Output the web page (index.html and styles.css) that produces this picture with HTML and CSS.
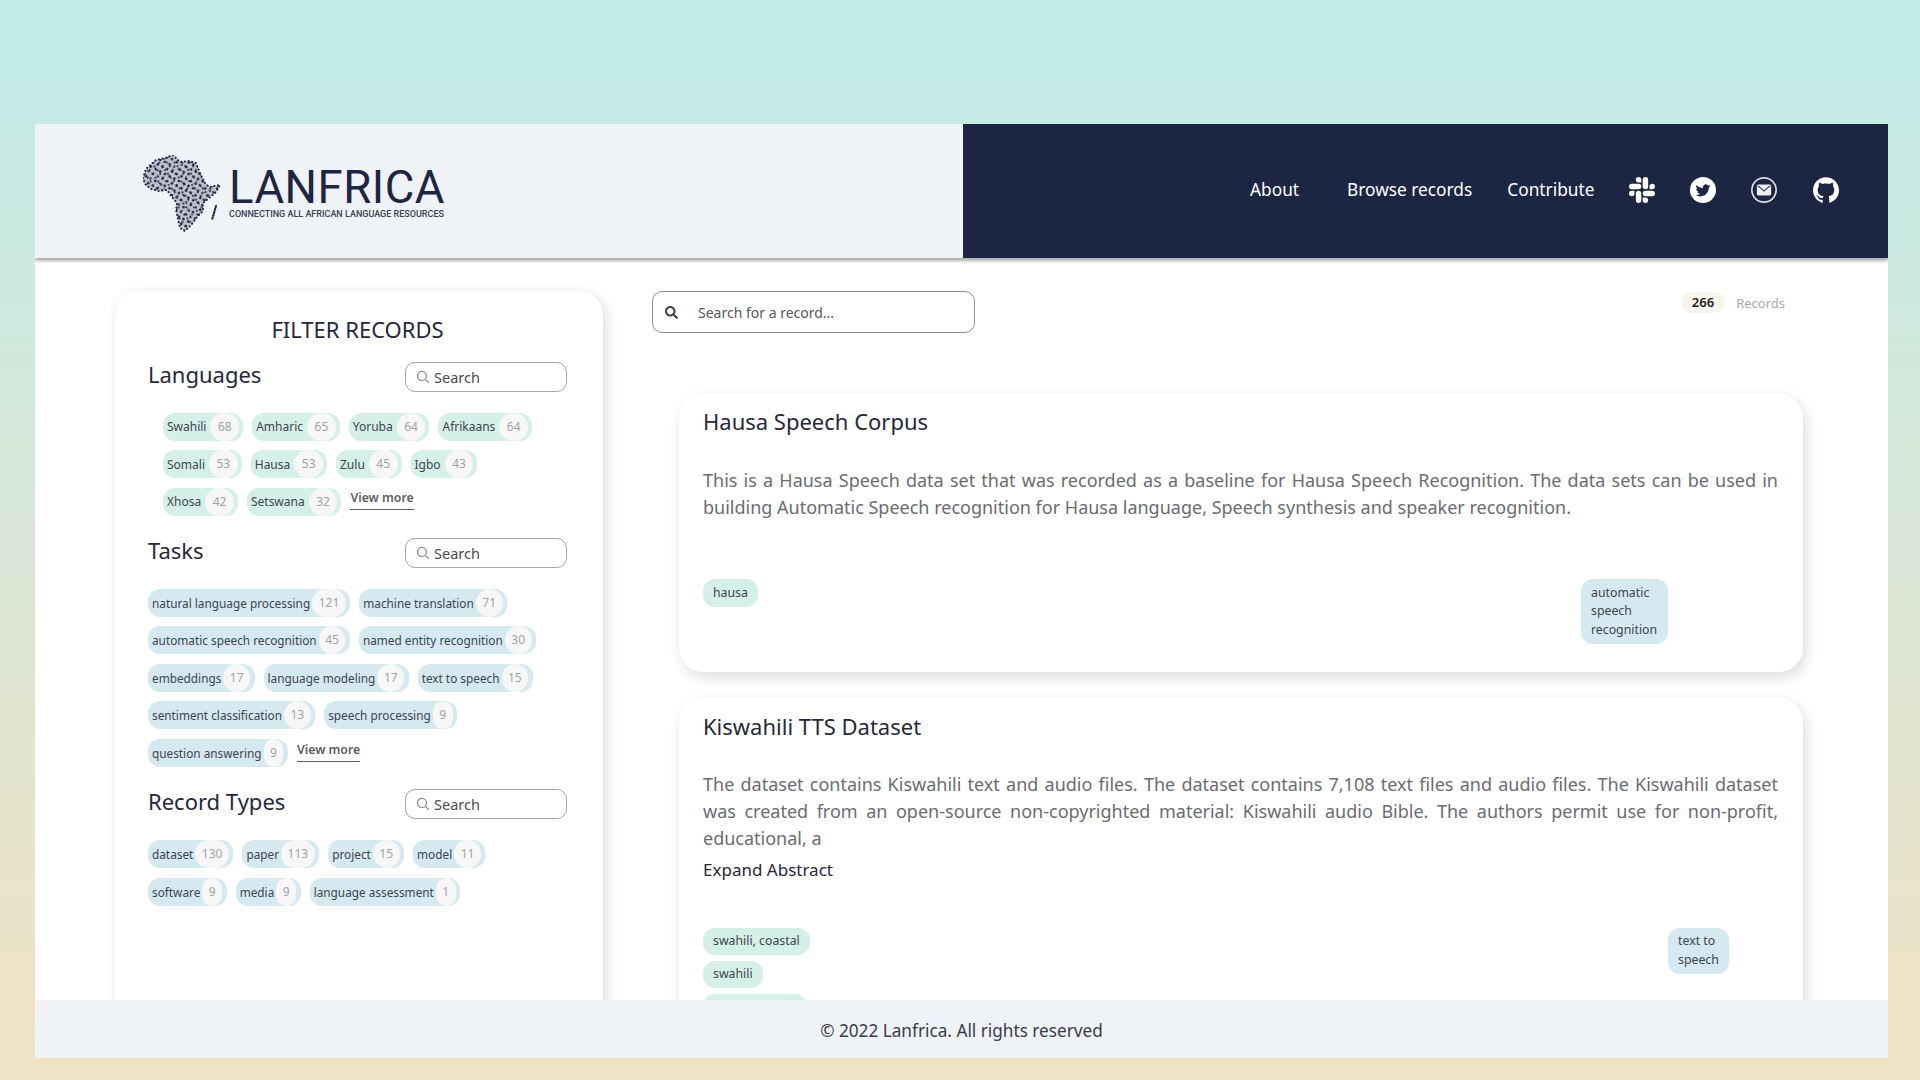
FILE: index.html
```html
<!DOCTYPE html>
<html lang="en">
<head>
<meta charset="utf-8">
<title>Lanfrica</title>
<link rel="stylesheet" href="styles.css">
</head>
<body>
<div class="frame">
  <header class="header">
    <div class="brand">
      <svg class="africa" viewBox="0 0 80 78" aria-hidden="true">
        <defs>
          <pattern id="dots-a" width="5.3" height="5.3" patternUnits="userSpaceOnUse" patternTransform="rotate(27)">
            <circle cx="1.6" cy="1.6" r="1.35" fill="#161c34"/>
          </pattern>
          <pattern id="dots-b" width="6.1" height="4.7" patternUnits="userSpaceOnUse" patternTransform="rotate(-38)">
            <circle cx="2" cy="2" r="1.05" fill="#272d45"/>
          </pattern>
          <pattern id="dots-c" width="7.3" height="6.7" patternUnits="userSpaceOnUse" patternTransform="rotate(64)">
            <circle cx="3" cy="3" r="0.7" fill="#eff2f6"/>
          </pattern>
          <path id="africa-shape" d="M0 23 L3 14 L13 5 L22 3 L30 0 L37 7 L46 6 L53 8 L57 18 L62 28 L66 32 L77 30 L73 37 L66 43 L60 48 L60 56 L54 62 L49 69 L42 76 L37 73 L35 64 L33 55 L34 48 L29 42 L24 35 L15 36 L8 34 L2 29 Z"/>
        </defs>
        <use href="#africa-shape" fill="#bcc1cc"/>
        <use href="#africa-shape" fill="url(#dots-a)"/>
        <use href="#africa-shape" fill="url(#dots-b)"/>
        <use href="#africa-shape" fill="url(#dots-c)"/>
        <use href="#africa-shape" fill="none" stroke="#1e2440" stroke-width="2" stroke-linecap="round" stroke-dasharray="0.1 3.6"/>
        <path d="M73 51 L69 65" fill="none" stroke="#272d45" stroke-width="2.2" stroke-linecap="round" stroke-dasharray="1.2 1.8"/>
      </svg>
      <div class="wordmark">
        <div class="wordmark-name">LANFRICA</div>
        <div class="wordmark-tag">CONNECTING ALL AFRICAN LANGUAGE RESOURCES</div>
      </div>
    </div>
    <nav class="nav">
      <a class="nav-link nav-about">About</a>
      <a class="nav-link">Browse records</a>
      <a class="nav-link">Contribute</a>
      <svg class="nav-icon nav-slack" viewBox="0 0 24 24" fill="#fff" aria-hidden="true"><path d="M5.042 15.165a2.528 2.528 0 0 1-2.52 2.523A2.528 2.528 0 0 1 0 15.165a2.527 2.527 0 0 1 2.522-2.52h2.52v2.52zM6.313 15.165a2.527 2.527 0 0 1 2.521-2.52 2.527 2.527 0 0 1 2.521 2.52v6.313A2.528 2.528 0 0 1 8.834 24a2.528 2.528 0 0 1-2.521-2.522v-6.313zM8.834 5.042a2.528 2.528 0 0 1-2.521-2.52A2.528 2.528 0 0 1 8.834 0a2.528 2.528 0 0 1 2.521 2.522v2.52H8.834zM8.834 6.313a2.528 2.528 0 0 1 2.521 2.521 2.528 2.528 0 0 1-2.521 2.521H2.522A2.528 2.528 0 0 1 0 8.834a2.528 2.528 0 0 1 2.522-2.521h6.312zM18.956 8.834a2.528 2.528 0 0 1 2.522-2.521A2.528 2.528 0 0 1 24 8.834a2.528 2.528 0 0 1-2.522 2.521h-2.522V8.834zM17.688 8.834a2.528 2.528 0 0 1-2.523 2.521 2.527 2.527 0 0 1-2.52-2.521V2.522A2.527 2.527 0 0 1 15.165 0a2.528 2.528 0 0 1 2.523 2.522v6.312zM15.165 18.956a2.528 2.528 0 0 1 2.523 2.522A2.528 2.528 0 0 1 15.165 24a2.527 2.527 0 0 1-2.52-2.522v-2.522h2.52zM15.165 17.688a2.527 2.527 0 0 1-2.52-2.523 2.526 2.526 0 0 1 2.52-2.52h6.313A2.527 2.527 0 0 1 24 15.165a2.528 2.528 0 0 1-2.522 2.523h-6.313z"/></svg>
      <svg class="nav-icon" viewBox="0 0 24 24" aria-hidden="true"><circle cx="12" cy="12" r="12" fill="#fff"/><path fill="#1c2542" transform="translate(5.2 5.6) scale(.565)" d="M23.953 4.57a10 10 0 01-2.825.775 4.958 4.958 0 002.163-2.723c-.951.555-2.005.959-3.127 1.184a4.92 4.92 0 00-8.384 4.482C7.69 8.095 4.067 6.13 1.64 3.162a4.822 4.822 0 00-.666 2.475c0 1.71.87 3.213 2.188 4.096a4.904 4.904 0 01-2.228-.616v.06a4.923 4.923 0 003.946 4.827 4.996 4.996 0 01-2.212.085 4.936 4.936 0 004.604 3.417 9.867 9.867 0 01-6.102 2.105c-.39 0-.779-.023-1.17-.067a13.995 13.995 0 007.557 2.209c9.053 0 13.998-7.496 13.998-13.985 0-.21 0-.42-.015-.63A9.935 9.935 0 0024 4.59z"/></svg>
      <svg class="nav-icon" viewBox="0 0 24 24" aria-hidden="true"><circle cx="12" cy="12" r="11.2" fill="none" stroke="#dfe1e9" stroke-width="1.5"/><rect x="5.4" y="7" width="13.2" height="10" rx="1.2" fill="#eef0f4"/><path d="M6.2 8 L12 12.9 L17.8 8" fill="none" stroke="#3d4560" stroke-width="1.1"/></svg>
      <svg class="nav-icon" viewBox="0 0 24 24" fill="#fff" aria-hidden="true"><path d="M12 .297c-6.63 0-12 5.373-12 12 0 5.303 3.438 9.8 8.205 11.385.6.113.82-.258.82-.577 0-.285-.01-1.04-.015-2.04-3.338.724-4.042-1.61-4.042-1.61C4.422 18.07 3.633 17.7 3.633 17.7c-1.087-.744.084-.729.084-.729 1.205.084 1.838 1.236 1.838 1.236 1.07 1.835 2.809 1.305 3.495.998.108-.776.417-1.305.76-1.605-2.665-.3-5.466-1.332-5.466-5.93 0-1.31.465-2.38 1.235-3.22-.135-.303-.54-1.523.105-3.176 0 0 1.005-.322 3.3 1.23.96-.267 1.98-.399 3-.405 1.02.006 2.04.138 3 .405 2.28-1.552 3.285-1.23 3.285-1.23.645 1.653.24 2.873.12 3.176.765.84 1.23 1.91 1.23 3.22 0 4.61-2.805 5.625-5.475 5.92.42.36.81 1.096.81 2.22 0 1.606-.015 2.896-.015 3.286 0 .315.21.69.825.57C20.565 22.092 24 17.592 24 12.297c0-6.627-5.373-12-12-12"/></svg>
    </nav>
  </header>

  <main class="content">
    <aside class="filters">
      <h2 class="filters-title">FILTER RECORDS</h2>

      <section class="facet">
        <div class="facet-head">
          <h3 class="facet-title">Languages</h3>
          <label class="facet-search">
            <svg class="facet-search-icon" viewBox="0 0 16 16" aria-hidden="true"><circle cx="6.8" cy="6.8" r="5.2"/><path d="M10.6 10.6 L14.6 14.6"/></svg>
            <input class="facet-input" placeholder="Search">
          </label>
        </div>
        <div class="chips chips-languages">
          <span class="chip"><span class="chip-label">Swahili</span><span class="chip-count">68</span></span>
          <span class="chip"><span class="chip-label">Amharic</span><span class="chip-count">65</span></span>
          <span class="chip"><span class="chip-label">Yoruba</span><span class="chip-count">64</span></span>
          <span class="chip"><span class="chip-label">Afrikaans</span><span class="chip-count">64</span></span>
          <span class="chip"><span class="chip-label">Somali</span><span class="chip-count">53</span></span>
          <span class="chip"><span class="chip-label">Hausa</span><span class="chip-count">53</span></span>
          <span class="chip"><span class="chip-label">Zulu</span><span class="chip-count">45</span></span>
          <span class="chip"><span class="chip-label">Igbo</span><span class="chip-count">43</span></span>
          <span class="chip"><span class="chip-label">Xhosa</span><span class="chip-count">42</span></span>
          <span class="chip"><span class="chip-label">Setswana</span><span class="chip-count">32</span></span>
          <a class="view-more">View more</a>
        </div>
      </section>

      <section class="facet facet-tasks">
        <div class="facet-head">
          <h3 class="facet-title">Tasks</h3>
          <label class="facet-search">
            <svg class="facet-search-icon" viewBox="0 0 16 16" aria-hidden="true"><circle cx="6.8" cy="6.8" r="5.2"/><path d="M10.6 10.6 L14.6 14.6"/></svg>
            <input class="facet-input" placeholder="Search">
          </label>
        </div>
        <div class="chips">
          <span class="chip"><span class="chip-label">natural language processing</span><span class="chip-count">121</span></span>
          <span class="chip"><span class="chip-label">machine translation</span><span class="chip-count">71</span></span>
          <span class="chip"><span class="chip-label">automatic speech recognition</span><span class="chip-count">45</span></span>
          <span class="chip"><span class="chip-label">named entity recognition</span><span class="chip-count">30</span></span>
          <span class="chip"><span class="chip-label">embeddings</span><span class="chip-count">17</span></span>
          <span class="chip"><span class="chip-label">language modeling</span><span class="chip-count">17</span></span>
          <span class="chip"><span class="chip-label">text to speech</span><span class="chip-count">15</span></span>
          <span class="chip"><span class="chip-label">sentiment classification</span><span class="chip-count">13</span></span>
          <span class="chip"><span class="chip-label">speech processing</span><span class="chip-count">9</span></span>
          <span class="chip"><span class="chip-label">question answering</span><span class="chip-count">9</span></span>
          <a class="view-more">View more</a>
        </div>
      </section>

      <section class="facet facet-types">
        <div class="facet-head">
          <h3 class="facet-title">Record Types</h3>
          <label class="facet-search">
            <svg class="facet-search-icon" viewBox="0 0 16 16" aria-hidden="true"><circle cx="6.8" cy="6.8" r="5.2"/><path d="M10.6 10.6 L14.6 14.6"/></svg>
            <input class="facet-input" placeholder="Search">
          </label>
        </div>
        <div class="chips">
          <span class="chip"><span class="chip-label">dataset</span><span class="chip-count">130</span></span>
          <span class="chip"><span class="chip-label">paper</span><span class="chip-count">113</span></span>
          <span class="chip"><span class="chip-label">project</span><span class="chip-count">15</span></span>
          <span class="chip"><span class="chip-label">model</span><span class="chip-count">11</span></span>
          <span class="chip"><span class="chip-label">software</span><span class="chip-count">9</span></span>
          <span class="chip"><span class="chip-label">media</span><span class="chip-count">9</span></span>
          <span class="chip"><span class="chip-label">language assessment</span><span class="chip-count">1</span></span>
        </div>
      </section>
    </aside>

    <section class="records">
      <div class="records-bar">
        <label class="record-search">
          <svg class="record-search-icon" viewBox="0 0 512 512" aria-hidden="true"><path d="M505 442.7L405.3 343c-4.5-4.5-10.6-7-17-7H372c27.6-35.3 44-79.7 44-128C416 93.1 322.9 0 208 0S0 93.1 0 208s93.1 208 208 208c48.3 0 92.7-16.4 128-44v16.3c0 6.4 2.5 12.5 7 17l99.7 99.7c9.4 9.4 24.6 9.4 33.9 0l28.3-28.3c9.4-9.4 9.4-24.6.1-34zM208 336c-70.7 0-128-57.2-128-128 0-70.7 57.2-128 128-128 70.7 0 128 57.2 128 128 0 70.7-57.2 128-128 128z"/></svg>
          <input class="record-input" placeholder="Search for a record...">
        </label>
        <div class="record-count"><span class="record-count-num">266</span><span class="record-count-label">Records</span></div>
      </div>

      <article class="record-card">
        <h3 class="record-title">Hausa Speech Corpus</h3>
        <p class="record-abstract">This is a Hausa Speech data set that was recorded as a baseline for Hausa Speech Recognition. The data sets can be used in building Automatic Speech recognition for Hausa language, Speech synthesis and speaker recognition.</p>
        <div class="record-tags record-tags-a">
          <div class="tag-col"><span class="tag tag-green">hausa</span></div>
          <div class="tag-col"><span class="tag tag-blue">automatic speech recognition</span></div>
        </div>
      </article>

      <article class="record-card record-card-second">
        <h3 class="record-title">Kiswahili TTS Dataset</h3>
        <p class="record-abstract">The dataset contains Kiswahili text and audio files. The dataset contains 7,108 text files and audio files. The Kiswahili dataset was created from an open-source non-copyrighted material: Kiswahili audio Bible. The authors permit use for non-profit, educational, a</p>
        <div class="record-expand">Expand Abstract</div>
        <div class="record-tags record-tags-b">
          <div class="tag-col">
            <span class="tag tag-green">swahili, coastal</span>
            <span class="tag tag-green">swahili</span>
            <span class="tag tag-green">swahili, mrima</span>
          </div>
          <div class="tag-col"><span class="tag tag-blue">text to speech</span></div>
        </div>
      </article>
    </section>
  </main>

  <footer class="footer">© 2022 Lanfrica. All rights reserved</footer>
</div>
</body>
</html>
```

FILE: styles.css
```css
* { box-sizing: border-box; }
html, body { height: 100%; }
body {
  margin: 0;
  height: 1080px;
  overflow: hidden;
  padding: 124px 32px 22px 35px;
  background: linear-gradient(180deg, #c0ece9 0%, #f0e2c5 97%);
  font-family: "Noto Sans", sans-serif;
  color: #26283a;
}
h2, h3, p { margin: 0; font-weight: 400; }

.frame {
  height: 934px;
  display: flex;
  flex-direction: column;
  background: #fff;
  overflow: hidden;
}

/* header */
.header {
  flex: 0 0 134px;
  display: flex;
  position: relative;
  z-index: 2;
  box-shadow: 0 3px 3px rgba(0, 0, 0, .32);
}
.brand {
  flex: 0 0 928px;
  background: #eff2f6;
  display: flex;
  align-items: flex-start;
  padding: 31px 0 0 108px;
}
.africa { width: 80px; height: 78px; flex: none; }
.wordmark { margin-left: 6px; padding-top: 11px; color: #1c2542; }
.wordmark-name {
  font-family: Roboto, sans-serif;
  font-weight: 400;
  font-size: 45.5px;
  line-height: 44px;
  letter-spacing: .5px;
}
.wordmark-tag {
  font-family: Roboto, sans-serif;
  font-weight: 500;
  font-size: 9px;
  line-height: 10px;
  margin-top: -1px;
  color: #3a4056;
  white-space: nowrap;
}
.nav {
  flex: 1;
  background: #1c2542;
  display: flex;
  align-items: center;
  padding: 0 48px 2px 287px;
  color: #fff;
}
.nav-link { font-size: 17.3px; line-height: 24px; margin-right: 35px; white-space: nowrap; }
.nav-about { margin-right: 48px; }
.nav-icon { width: 26px; height: 26px; flex: none; margin-right: 35.5px; }
.nav-slack { margin-right: 34.3px; }
.nav-icon:last-child { margin-right: 0; }

/* content */
.content {
  flex: 1;
  min-height: 0;
  display: flex;
  align-items: flex-start;
  padding: 33px 0 0 80px;
  overflow: hidden;
}

/* filters */
.filters {
  flex: 0 0 488px;
  height: 760px;
  padding: 21.5px 36px 0 33px;
  background: #fff;
  border-radius: 24px;
  box-shadow: 3px 4px 14px rgba(0, 0, 0, .14);
}
.filters-title { font-size: 22px; line-height: 32px; text-align: center; color: #26283a; }
.facet { padding-top: 17.5px; }
.facet-tasks { padding-top: 22px; }
.facet-types { padding-top: 22.5px; }
.facet-head { display: flex; align-items: center; justify-content: space-between; height: 30px; }
.facet-title { font-size: 22px; line-height: 30px; color: #26283a; position: relative; top: -3px; }
.facet-search {
  width: 162px;
  height: 30px;
  display: flex;
  align-items: center;
  gap: 4px;
  padding: 0 10px;
  border: 1px solid #a3a3a8;
  border-radius: 10px;
  background: #fff;
}
.facet-search-icon { width: 14px; height: 14px; flex: none; fill: none; stroke: #8b8d92; stroke-width: 1.4; }
.facet-input {
  flex: 1;
  width: 100%;
  min-width: 0;
  border: 0;
  padding: 0;
  outline: 0;
  background: none;
  font: 14.5px "Noto Sans", sans-serif;
}
.facet-input::placeholder { color: #4a4c56; opacity: 1; }

.chips {
  display: flex;
  flex-wrap: wrap;
  align-items: flex-start;
  gap: 9.5px 9px;
  margin-top: 21px;
}
.chip {
  height: 28px;
  display: inline-flex;
  align-items: center;
  padding: 0 4.5px 0 4px;
  border-radius: 12px;
  background: #d4e9f0;
  font-size: 11.8px;
  color: #3d4450;
  white-space: nowrap;
}
.chip-label { margin-right: 2px; }
.chip-count {
  height: 28px;
  line-height: 28px;
  padding: 0 6.5px;
  text-align: center;
  border-radius: 14px;
  background: #f6f7f6;
  color: #a0a2a6;
  font-size: 12px;
}
.chips-languages { padding: 0 10px 0 15px; margin-top: 20.5px; }
.chips-languages .chip { background: #d5f0e8; font-size: 12px; padding-right: 4px; }
.chips-languages .chip-label { margin-right: 4px; }
.chips-languages .chip-count { padding: 0 7.5px; }
.view-more {
  font-size: 12.3px;
  font-weight: 600;
  line-height: 18px;
  color: #5c5e66;
  border-bottom: 1px solid #5c5e66;
  padding-bottom: 2px;
  margin-top: 1px;
}
.facet-tasks .view-more { margin-top: 2px; }

/* records */
.records { flex: 1; min-width: 0; margin-left: 49px; }
.records-bar {
  display: flex;
  justify-content: space-between;
  align-items: flex-start;
  height: 42px;
  padding-right: 103px;
}
.record-search {
  width: 323px;
  height: 42px;
  display: flex;
  align-items: center;
  gap: 20px;
  padding: 0 12px;
  border: 1px solid #8f9096;
  border-radius: 10px;
}
.record-search-icon { width: 13px; height: 13px; flex: none; fill: #3d4450; }
.record-input {
  flex: 1;
  min-width: 0;
  border: 0;
  padding: 0;
  outline: 0;
  background: none;
  font: 14px "Noto Sans", sans-serif;
}
.record-input::placeholder { color: #54565f; opacity: 1; }
.record-count { display: flex; align-items: center; gap: 11px; padding-top: 1px; font-size: 13px; }
.record-count-num {
  padding: 0 11px;
  line-height: 21px;
  border-radius: 10px;
  background: #f7f6ec;
  color: #1f2024;
  font-weight: 600;
}
.record-count-label { color: #a8a9ae; }

.record-card {
  width: 1124px;
  margin: 61px 0 0 27px;
  padding: 12px 25px 28px 24px;
  background: #fff;
  border-radius: 24px;
  box-shadow: 3px 5px 14px rgba(0, 0, 0, .14);
}
.record-card-second { margin-top: 26px; padding-top: 13px; }
.record-title { font-size: 22px; line-height: 30px; color: #26283a; }
.record-abstract {
  margin-top: 31px;
  font-size: 18px;
  line-height: 27px;
  text-align: justify;
  color: #6a6c72;
}
.record-card-second .record-abstract { margin-top: 30px; }
.record-expand { margin-top: 4px; font-size: 17px; line-height: 27px; color: #26283a; }
.record-tags { display: grid; margin-top: 58px; }
.record-card-second .record-tags { margin-top: 45px; }
.record-tags-a { grid-template-columns: 878px 87px; }
.record-tags-b { grid-template-columns: 965px 61px; }
.tag-col { display: flex; flex-direction: column; align-items: flex-start; gap: 5.5px; }
.tag {
  display: block;
  padding: 4.5px 10px;
  border-radius: 12px;
  font-size: 12.3px;
  line-height: 18.5px;
  color: #3f434c;
}
.tag-green { background: #d5f0e8; }
.tag-blue { background: #d4e9f0; }

/* footer */
.footer {
  flex: 0 0 58px;
  display: flex;
  align-items: center;
  justify-content: center;
  padding-top: 2px;
  position: relative;
  z-index: 2;
  background: #eff2f6;
  font-size: 17.2px;
  color: #3a3b4a;
}
```
